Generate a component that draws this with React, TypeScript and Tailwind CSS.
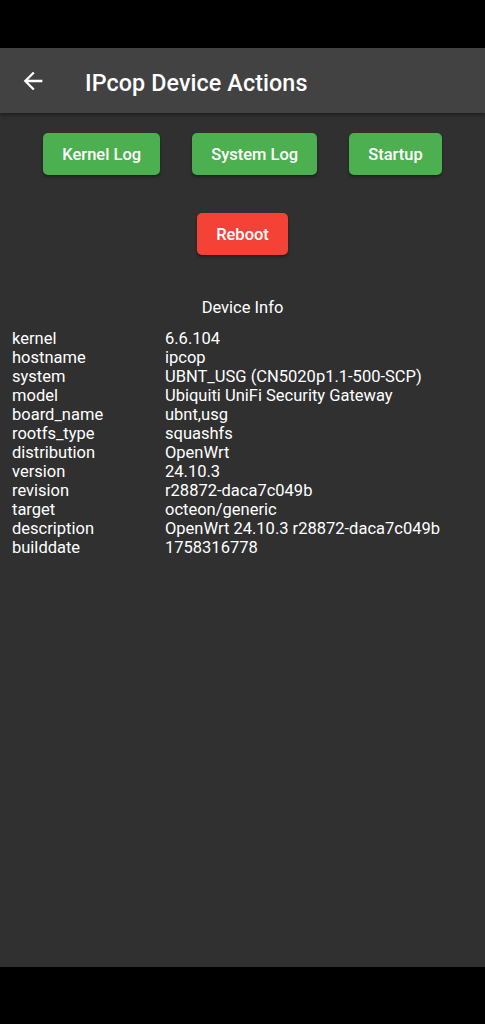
import React from 'react';

const info: [string, string][] = [
  ['kernel', '6.6.104'],
  ['hostname', 'ipcop'],
  ['system', 'UBNT_USG (CN5020p1.1-500-SCP)'],
  ['model', 'Ubiquiti UniFi Security Gateway'],
  ['board_name', 'ubnt,usg'],
  ['rootfs_type', 'squashfs'],
  ['distribution', 'OpenWrt'],
  ['version', '24.10.3'],
  ['revision', 'r28872-daca7c049b'],
  ['target', 'octeon/generic'],
  ['description', 'OpenWrt 24.10.3 r28872-daca7c049b'],
  ['builddate', '1758316778'],
];

function ActionButton({ label, danger }: { label: string; danger?: boolean }) {
  return (
    <button
      className={
        'h-[42px] px-[19px] rounded-[5px] text-white text-[16.5px] font-medium shadow-[0_2px_3px_rgba(0,0,0,0.35)] ' +
        (danger ? 'bg-[#f44336]' : 'bg-[#4caf50]')
      }
    >
      <span className="relative top-px">{label}</span>
    </button>
  );
}

export default function App() {
  return (
    <div className="w-[485px] h-[1024px] flex flex-col bg-black font-['Roboto',sans-serif] overflow-hidden">
      {/* status bar */}
      <div className="h-12 bg-black" />

      {/* app bar */}
      <header className="relative z-10 h-[65px] bg-[#424242] flex items-center shadow-[0_2px_4px_rgba(0,0,0,0.4)]">
        <div className="w-[85px] flex justify-start pl-[19px] pt-px">
          <svg width="28" height="28" viewBox="0 0 24 24" fill="white">
            <path d="M20 11H7.83l5.59-5.59L12 4l-8 8 8 8 1.41-1.41L7.83 13H20v-2z" />
          </svg>
        </div>
        <h1 className="pt-[5px] text-white text-[23.3px] font-medium tracking-[0.1px]">IPcop Device Actions</h1>
      </header>

      {/* body */}
      <main className="flex-1 bg-[#303030] flex flex-col">
        <div className="flex justify-center gap-8 pt-5">
          <ActionButton label="Kernel Log" />
          <ActionButton label="System Log" />
          <ActionButton label="Startup" />
        </div>
        <div className="flex justify-center mt-[38px]">
          <ActionButton label="Reboot" danger />
        </div>

        <div className="mt-[43px] text-center text-white text-[16.5px] leading-[19px]">Device Info</div>

        <div className="mt-[12px] px-3 text-white text-[16.5px] leading-[19px]">
          {info.map(([k, v]) => (
            <div key={k} className="flex">
              <span className="w-[153px] shrink-0">{k}</span>
              <span>{v}</span>
            </div>
          ))}
        </div>
      </main>

      {/* nav bar */}
      <div className="h-[57px] bg-black" />
    </div>
  );
}
